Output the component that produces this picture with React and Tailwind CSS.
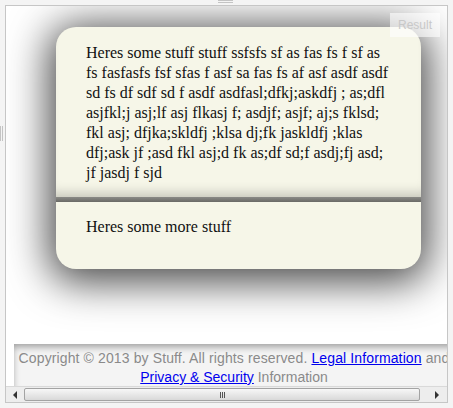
import React from "react";

const serif = { fontFamily: '"Liberation Serif", "Times New Roman", serif' };
const sans = { fontFamily: '"Liberation Sans", Arial, sans-serif' };

function Grip({ vertical }) {
  return vertical ? (
    <div className="absolute left-0 top-[126px] flex gap-[1px]">
      <div className="w-[1px] h-[15px] bg-[#c4c4c4]" />
      <div className="w-[1px] h-[15px] bg-[#c4c4c4]" />
    </div>
  ) : (
    <div className="absolute top-0 left-[218px] flex flex-col gap-[1px]">
      <div className="h-[1px] w-[15px] bg-[#c4c4c4]" />
      <div className="h-[1px] w-[15px] bg-[#c4c4c4]" />
    </div>
  );
}

function Scrollbar() {
  return (
    <div className="h-[16px] flex items-stretch bg-[#ededed] border-t border-[#d9d9d9]">
      <div className="w-[18px] flex items-center justify-center">
        <div className="w-0 h-0 border-y-[4px] border-y-transparent border-r-[4px] border-r-[#333]" />
      </div>
      <div className="w-[396px] my-[1px] rounded-[2px] border border-[#a3a3a3] bg-gradient-to-b from-[#f7f7f7] to-[#d9d9d9] flex items-center justify-center">
        <div className="flex gap-[1px]">
          <div className="w-[1px] h-[6px] bg-[#555]" />
          <div className="w-[1px] h-[6px] bg-[#555]" />
          <div className="w-[1px] h-[6px] bg-[#555]" />
        </div>
      </div>
      <div className="flex-1 flex items-center justify-center pl-[6px]">
        <div className="w-0 h-0 border-y-[4px] border-y-transparent border-l-[4px] border-l-[#333]" />
      </div>
    </div>
  );
}

export default function App() {
  return (
    <div className="relative w-[453px] h-[408px] bg-[#f4f4f4] p-[5px] overflow-hidden">
      <Grip />
      <Grip vertical />
      <div className="h-full border border-[#c6c6c6] bg-white flex flex-col">
        <div className="relative flex-1 flex flex-col overflow-hidden">
          <div
            className="ml-[50px] mt-[21px] w-[365px] rounded-[20px] bg-[#f6f6e8] text-[16px] leading-[20px] text-[#111] shadow-[0_6px_42px_7px_rgba(0,0,0,0.72)] overflow-hidden"
            style={serif}
          >
            <div className="px-[30px] pt-[16px] pb-[14px] shadow-[inset_0_-12px_12px_-8px_rgba(0,0,0,0.2)]">
              <p>
                Heres some stuff stuff ssfsfs sf as fas fs f sf as fs fasfasfs fsf sfas f asf sa fas fs af asf asdf asdf sd fs df sdf sd f asdf asdfasl;dfkj;askdfj ; as;dfl asjfkl;j asj;lf asj flkasj f; asdjf; asjf; aj;s fklsd; fkl asj; dfjka;skldfj ;klsa dj;fk jaskldfj ;klas dfj;ask jf ;asd fkl asj;d fk as;df sd;f asdj;fj asd; jf jasdj f sjd
              </p>
            </div>
            <div className="h-[5px] bg-gradient-to-b from-[#8a8a86] to-[#6a6a66]" />
            <div className="px-[30px] pt-[15px] pb-[32px]">
              <p>Heres some more stuff</p>
            </div>
          </div>

          <div
            className="absolute right-[7px] top-[7px] w-[50px] h-[24px] bg-white/60 flex items-center justify-center text-[12px] text-[#c8c8c8]"
            style={sans}
          >
            Result
          </div>

          <div
            className="mt-auto ml-[8px] w-[440px] h-[42px] bg-[#f4f4f4] shadow-[inset_1px_5px_7px_-2px_rgba(0,0,0,0.35)] pt-[5px] px-[2px] text-center text-[14px] leading-[19px] text-[#8a8a8a]"
            style={sans}
          >
            <span className="tracking-[0.12px]">
              Copyright © 2013 by Stuff. All rights reserved.{" "}
              <a href="#" className="text-[#0000ee] underline">
                Legal Information
              </a>{" "}
              and
            </span>{" "}
            <a href="#" className="text-[#0000ee] underline">
              Privacy &amp; Security
            </a>{" "}
            Information
          </div>
        </div>
        <Scrollbar />
      </div>
    </div>
  );
}
